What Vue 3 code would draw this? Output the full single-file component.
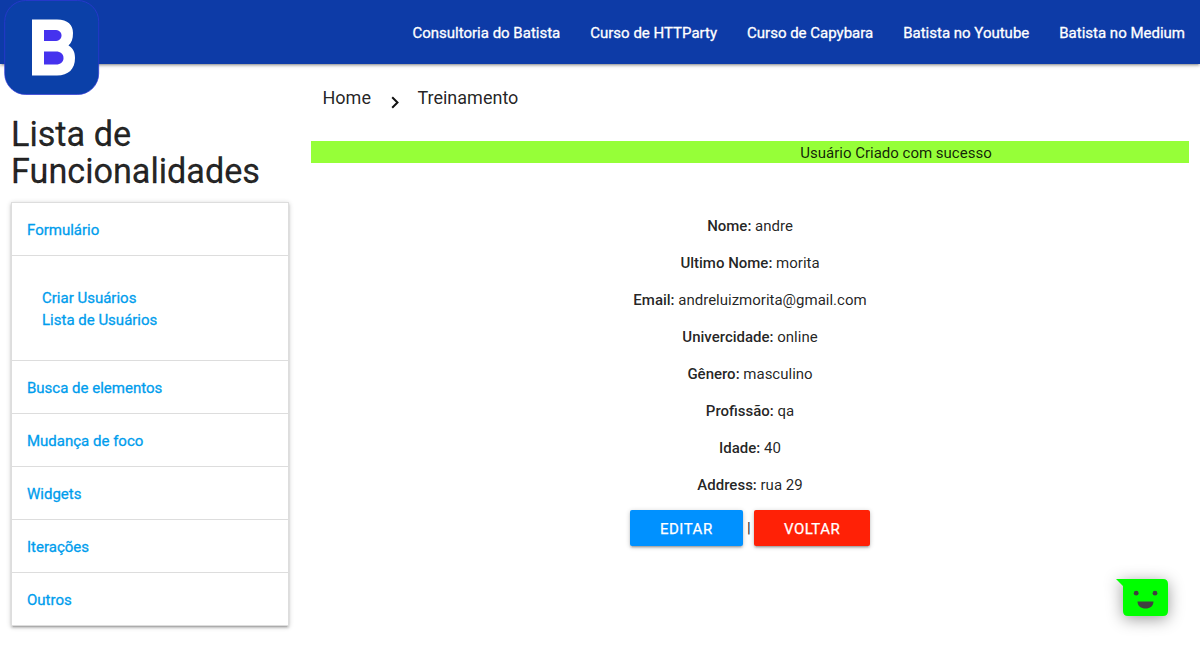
<script setup>
const navLinks = ['Consultoria do Batista', 'Curso de HTTParty', 'Curso de Capybara', 'Batista no Youtube', 'Batista no Medium']
const sections = [
  { title: 'Formulário', children: ['Criar Usuários', 'Lista de Usuários'] },
  { title: 'Busca de elementos' },
  { title: 'Mudança de foco' },
  { title: 'Widgets' },
  { title: 'Iterações' },
  { title: 'Outros' }
]
const fields = [
  ['Nome:', 'andre'],
  ['Ultimo Nome:', 'morita'],
  ['Email:', 'andreluizmorita@gmail.com'],
  ['Univercidade:', 'online'],
  ['Gênero:', 'masculino'],
  ['Profissão:', 'qa'],
  ['Idade:', '40'],
  ['Address:', 'rua 29']
]
</script>

<template>
  <div class="page">
    <nav class="navbar">
      <a class="brand" href="#">
        <svg width="96" height="96" viewBox="0 0 96 96">
          <rect x=".7" y=".5" width="94" height="94" rx="21" fill="#0b40a8" stroke="#3036d8" stroke-width=".7" />
          <path d="M28 19.500H53C64 19.500 69 25 69 33C69 39 67.500 43 64.500 45.500C69 48 71 52 71 58C71 69 64.500 75.500 53 75.500H28Z" fill="#fff" />
          <path d="M40 30H50.500C55 30 57.500 32 57.500 35.500C57.500 39 55 41 50.500 41H40Z" fill="#4532ee" />
          <path d="M40 51.500H52C56.500 51.500 59.500 54 59.500 58C59.500 62 56.500 64.500 52 64.500H40Z" fill="#4532ee" />
        </svg>
      </a>
      <a v-for="link in navLinks" :key="link" class="nav-link" href="#">{{ link }}</a>
    </nav>

    <div class="row">
      <aside class="sidebar">
        <h4>Lista de Funcionalidades</h4>
        <ul class="collapsible">
          <li v-for="s in sections" :key="s.title">
            <a class="header" href="#">{{ s.title }}</a>
            <div v-if="s.children" class="body">
              <a v-for="c in s.children" :key="c" href="#">{{ c }}</a>
            </div>
          </li>
        </ul>
      </aside>

      <main class="content">
        <div class="breadcrumbs">
          <a href="#">Home</a>
          <svg class="chevron" width="8" height="13" viewBox="0 0 8 13"><path d="M1.200 1.200L6.500 6.500L1.200 11.800" fill="none" stroke="#111" stroke-width="2" /></svg>
          <a href="#">Treinamento</a>
        </div>
        <div class="notice">Usuário Criado com sucesso</div>
        <div class="details">
          <p v-for="[label, value] in fields" :key="label"><strong>{{ label }}</strong> {{ value }}</p>
        </div>
        <div class="actions">
          <a class="btn edit" href="#">Editar</a>
          <span class="divider">|</span>
          <a class="btn back" href="#">Voltar</a>
        </div>
      </main>
    </div>

    <svg class="chat" width="54" height="39" viewBox="0 0 54 39">
      <path d="M0 0H47Q52 0 52 5V32Q52 37 47 37H12Q7 37 7 32V7Z" fill="#0f0" />
      <circle cx="20.200" cy="14.200" r="2.400" fill="#404040" />
      <circle cx="39" cy="14.200" r="2.400" fill="#404040" />
      <path d="M21.500 22.500H37.500C37.500 27 34 29.500 29.500 29.500S21.500 27 21.500 22.500Z" fill="#404040" />
    </svg>
  </div>
</template>

<style>
body {
  background: #fff;
  overflow: hidden;
}
</style>

<style scoped>
.page {
  height: 649px;
  overflow: hidden;
  font: 400 15px/22px Roboto, sans-serif;
  color: rgba(0, 0, 0, .87);
}
a {
  text-decoration: none;
  color: inherit;
}
.navbar {
  position: relative;
  display: flex;
  justify-content: flex-end;
  height: 64px;
  background: #0d3ba7;
  box-shadow: 0 2px 2px 0 rgba(0, 0, 0, .14), 0 3px 1px -2px rgba(0, 0, 0, .12), 0 1px 5px 0 rgba(0, 0, 0, .2);
}
.brand {
  position: absolute;
  left: 4px;
  top: 0;
  height: 96px;
}
.nav-link {
  padding: 0 15px;
  line-height: 66px;
  -webkit-text-stroke: .3px;
  color: #fff;
}
.row {
  display: flex;
}
.sidebar {
  width: 300px;
  box-sizing: border-box;
  padding: 52px 11px 0;
}
h4 {
  margin: 0 0 12px;
  font-size: 34.200px;
  line-height: 37px;
  font-weight: 400;
  -webkit-text-stroke: .3px;
}
.collapsible {
  margin: 0;
  padding: 0;
  list-style: none;
  border: 1px solid #ddd;
  border-bottom: 0;
  box-shadow: 0 2px 2px 0 rgba(0, 0, 0, .14), 0 3px 1px -2px rgba(0, 0, 0, .12), 0 1px 5px 0 rgba(0, 0, 0, .2);
  -webkit-text-stroke: .3px;
  color: #009ded;
}
.header {
  display: block;
  padding: 16px 15px 14px;
  border-bottom: 1px solid #ddd;
}
.body {
  display: flex;
  flex-direction: column;
  padding: 31px 30px 29px;
  border-bottom: 1px solid #ddd;
}
.content {
  flex: 1;
  padding: 0 11px;
}
.breadcrumbs {
  display: flex;
  align-items: center;
  height: 68px;
  padding-left: 11.500px;
  font-size: 18px;
}
.chevron {
  margin: 9px 18.500px 0 20px;
}
.notice {
  margin-top: 9px;
  height: 22px;
  padding-left: 292px;
  line-height: 24px;
  text-align: center;
  background: #96ff38;
}
.details {
  padding-top: 52px;
  text-align: center;
}
.details p {
  margin: 0 0 15px;
}
.details p:last-child {
  margin-bottom: 14px;
}
strong {
  font-weight: 500;
}
.actions {
  display: flex;
  justify-content: center;
  gap: 4px;
  line-height: 36px;
}
.btn {
  box-sizing: border-box;
  height: 36px;
  padding-left: 30px;
  border-radius: 2px;
  color: #fff;
  line-height: 38px;
  letter-spacing: .5px;
  text-transform: uppercase;
  -webkit-text-stroke: .25px;
  box-shadow: 0 2px 2px 0 rgba(0, 0, 0, .14), 0 3px 1px -2px rgba(0, 0, 0, .12), 0 1px 5px 0 rgba(0, 0, 0, .2);
}
.edit {
  width: 113px;
  background: #0091ff;
}
.back {
  width: 116px;
  background: #ff2106;
}
.divider {
  width: 3px;
  color: #222;
}
.chat {
  position: absolute;
  left: 1116px;
  top: 579px;
  overflow: visible;
  filter: drop-shadow(0 3px 8px rgba(0, 0, 0, .4));
}
</style>
